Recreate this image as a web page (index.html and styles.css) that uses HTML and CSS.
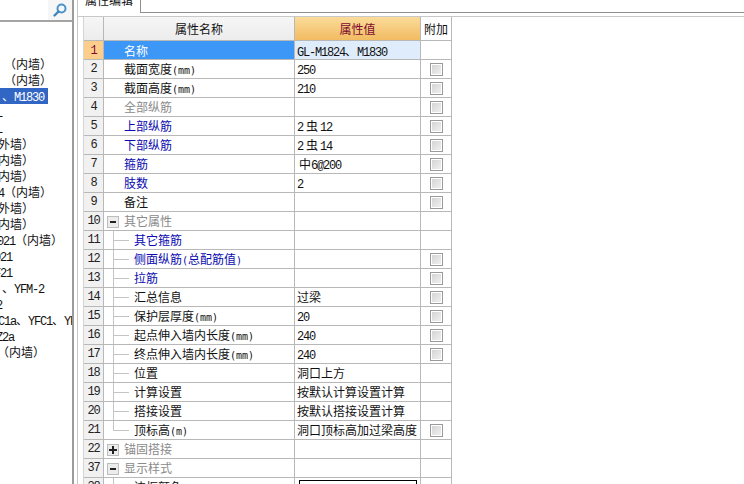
FILE: index.html
```html
<!DOCTYPE html>
<html lang="zh-CN">

<head>
    <meta charset="utf-8">
    <link rel="stylesheet" href="styles.css">
    <title>属性编辑</title>
</head>

<body>
    <div class="page">
        <aside class="side">
            <div class="search">
                <div class="search-btn">
                    <svg width="16" height="16" viewBox="0 0 16 16">
                        <circle cx="9.5" cy="6.5" r="4" fill="#f2f8fc" stroke="#4b93c9" stroke-width="2"/>
                        <path d="M6.5 9.5 L2.5 13.5" stroke="#3f86bd" stroke-width="2.4" stroke-linecap="round"/>
                    </svg>
                </div>
            </div>
            <div class="tree">
                <div class="node at4">（内墙）</div>
                <div class="node at4">（内墙）</div>
                <div class="node selected"><span class="at2">、<span class="lat">M1830</span></span></div>
                <div class="node atm10"><span class="lat">GL</span></div>
                <div class="node atm10"><span class="lat">GL</span></div>
                <div class="node atm2">外墙）</div>
                <div class="node atm2">内墙）</div>
                <div class="node atm2">内墙）</div>
                <div class="node atm2"><span class="lat">4</span>（内墙）</div>
                <div class="node atm2">外墙）</div>
                <div class="node atm2">内墙）</div>
                <div class="node atm3"><span class="lat">021</span>（内墙）</div>
                <div class="node atm6"><span class="lat">021</span></div>
                <div class="node atm6"><span class="lat">F21</span></div>
                <div class="node at2">、<span class="lat">YFM-2</span></div>
                <div class="node atm10"><span class="lat">M2</span></div>
                <div class="node atm2"><span class="lat">C1a</span>、<span class="lat">YFC1</span>、<span class="lat">YFC2</span></div>
                <div class="node atm4"><span class="lat">Z2a</span></div>
                <div class="node atm3">（内墙）</div>
            </div>
        </aside>

        <main class="editor">
            <div class="tabs">
                <div class="tab"><span class="tab-text">属性编辑</span></div>
            </div>
            <div class="grid-top">
                <table class="grid">
                    <colgroup>
                        <col class="c-num">
                        <col class="c-name">
                        <col class="c-val">
                        <col class="c-add">
                    </colgroup>
                    <thead>
                        <tr>
                            <th class="corner"></th>
                            <th class="h-name">属性名称</th>
                            <th class="h-val">属性值</th>
                            <th class="h-add">附加</th>
                        </tr>
                    </thead>
                    <tbody>
                        <tr class="current">
                            <td class="num">1</td>
                            <td class="name">名称</td>
                            <td class="val"><span class="lat">GL-M1824</span>、<span class="lat">M1830</span></td>
                            <td></td>
                        </tr>
                        <tr>
                            <td class="num">2</td>
                            <td class="name">截面宽度<span class="unit">(mm)</span></td>
                            <td class="val"><span class="lat">250</span></td>
                            <td class="add"><input type="checkbox"></td>
                        </tr>
                        <tr>
                            <td class="num">3</td>
                            <td class="name">截面高度<span class="unit">(mm)</span></td>
                            <td class="val"><span class="lat">210</span></td>
                            <td class="add"><input type="checkbox"></td>
                        </tr>
                        <tr>
                            <td class="num">4</td>
                            <td class="name muted">全部纵筋</td>
                            <td class="val"></td>
                            <td class="add"><input type="checkbox"></td>
                        </tr>
                        <tr>
                            <td class="num">5</td>
                            <td class="name link">上部纵筋</td>
                            <td class="val"><span class="lat">2</span><span class="rebar">虫</span><span class="lat">12</span></td>
                            <td class="add"><input type="checkbox"></td>
                        </tr>
                        <tr>
                            <td class="num">6</td>
                            <td class="name link">下部纵筋</td>
                            <td class="val"><span class="lat">2</span><span class="rebar">虫</span><span class="lat">14</span></td>
                            <td class="add"><input type="checkbox"></td>
                        </tr>
                        <tr>
                            <td class="num">7</td>
                            <td class="name link">箍筋</td>
                            <td class="val"><span class="dia">中</span><span class="lat">6@200</span></td>
                            <td class="add"><input type="checkbox"></td>
                        </tr>
                        <tr>
                            <td class="num">8</td>
                            <td class="name link">肢数</td>
                            <td class="val"><span class="lat">2</span></td>
                            <td class="add"><input type="checkbox"></td>
                        </tr>
                        <tr>
                            <td class="num">9</td>
                            <td class="name">备注</td>
                            <td class="val"></td>
                            <td class="add"><input type="checkbox"></td>
                        </tr>
                        <tr>
                            <td class="num">10</td>
                            <td class="group muted"><span class="toggle minus"></span>其它属性</td>
                            <td class="val"></td>
                            <td></td>
                        </tr>
                        <tr>
                            <td class="num">11</td>
                            <td class="child link">其它箍筋</td>
                            <td class="val"></td>
                            <td></td>
                        </tr>
                        <tr>
                            <td class="num">12</td>
                            <td class="child link">侧面纵筋<span class="unit">(</span>总配筋值<span class="unit">)</span></td>
                            <td class="val"></td>
                            <td class="add"><input type="checkbox"></td>
                        </tr>
                        <tr>
                            <td class="num">13</td>
                            <td class="child link">拉筋</td>
                            <td class="val"></td>
                            <td class="add"><input type="checkbox"></td>
                        </tr>
                        <tr>
                            <td class="num">14</td>
                            <td class="child">汇总信息</td>
                            <td class="val">过梁</td>
                            <td class="add"><input type="checkbox"></td>
                        </tr>
                        <tr>
                            <td class="num">15</td>
                            <td class="child">保护层厚度<span class="unit">(mm)</span></td>
                            <td class="val"><span class="lat">20</span></td>
                            <td class="add"><input type="checkbox"></td>
                        </tr>
                        <tr>
                            <td class="num">16</td>
                            <td class="child">起点伸入墙内长度<span class="unit">(mm)</span></td>
                            <td class="val"><span class="lat">240</span></td>
                            <td class="add"><input type="checkbox"></td>
                        </tr>
                        <tr>
                            <td class="num">17</td>
                            <td class="child">终点伸入墙内长度<span class="unit">(mm)</span></td>
                            <td class="val"><span class="lat">240</span></td>
                            <td class="add"><input type="checkbox"></td>
                        </tr>
                        <tr>
                            <td class="num">18</td>
                            <td class="child">位置</td>
                            <td class="val">洞口上方</td>
                            <td></td>
                        </tr>
                        <tr>
                            <td class="num">19</td>
                            <td class="child">计算设置</td>
                            <td class="val">按默认计算设置计算</td>
                            <td></td>
                        </tr>
                        <tr>
                            <td class="num">20</td>
                            <td class="child">搭接设置</td>
                            <td class="val">按默认搭接设置计算</td>
                            <td></td>
                        </tr>
                        <tr>
                            <td class="num">21</td>
                            <td class="child last">顶标高<span class="unit">(m)</span></td>
                            <td class="val">洞口顶标高加过梁高度</td>
                            <td class="add"><input type="checkbox"></td>
                        </tr>
                        <tr>
                            <td class="num">22</td>
                            <td class="group muted"><span class="toggle plus"></span>锚固搭接</td>
                            <td class="val"></td>
                            <td></td>
                        </tr>
                        <tr>
                            <td class="num">37</td>
                            <td class="group muted"><span class="toggle minus"></span>显示样式</td>
                            <td class="val"></td>
                            <td></td>
                        </tr>
                        <tr>
                            <td class="num">38</td>
                            <td class="child">边框颜色</td>
                            <td class="val"><div class="swatch"></div></td>
                            <td></td>
                        </tr>
                    </tbody>
                </table>
            </div>
        </main>
    </div>
</body>

</html>
```

FILE: styles.css
```css
*,
*:before,
*:after {
    box-sizing: border-box;
}

html,
body {
    margin: 0;
    height: 100%;
    overflow: hidden;
    background: #fff;
}

body {
    font-family: "Noto Sans CJK SC", "Liberation Mono", monospace;
    font-size: 12px;
    color: #111;
}

.page {
    display: flex;
    height: 484px;
    overflow: hidden;
}

/* latin text is narrower than the cjk cells, 6px a letter */
.lat {
    font-family: "Liberation Mono", monospace;
    font-size: 12px;
    line-height: 0;
    letter-spacing: -1.2px;
}

.unit {
    font-family: "DejaVu Sans Mono", monospace;
    font-size: 10px;
    line-height: 0;
}

.rebar {
    margin: 0 2px 0 3px;
    line-height: 0;
}

.dia {
    margin-left: 2px;
    line-height: 0;
}

/* left tree */
.side {
    flex: none;
    width: 74px;
    border-right: 2px solid #9c9c9c;
    overflow: hidden;
}

.search {
    display: flex;
    justify-content: flex-end;
    height: 22px;
    border-bottom: 2px solid #a4a4a4;
}

.search-btn {
    display: flex;
    align-items: center;
    justify-content: center;
    width: 24px;
    background: #f6f6f6;
}

.tree {
    padding-top: 34px;
    width: 72px;
    overflow: hidden;
}

.node {
    height: 16px;
    line-height: 16px;
    white-space: nowrap;
}

.node.selected {
    width: 48px;
    background: #3166c4;
    color: #fff;
}

.at4 { margin-left: 4px; }
.at2 { margin-left: 2px; }
.atm2 { margin-left: -2px; }
.atm3 { margin-left: -3px; }
.atm4 { margin-left: -4px; }
.atm6 { margin-left: -6px; }
.atm10 { margin-left: -10px; }

/* right side */
.editor {
    flex: 1;
    min-width: 0;
    margin-left: 3px;
    border-left: 1px solid #c8c8c8;
}

.tabs {
    height: 13px;
    margin-bottom: 3px;
    border-bottom: 1px solid #8f8f8f;
}

.tab {
    width: 63px;
    height: 13px;
    padding-left: 7px;
    overflow: hidden;
    background: #fff;
    border-right: 1px solid #8f8f8f;
}

.tab-text {
    display: block;
    margin-top: -9px;
    line-height: 18px;
    font-size: 12px;
}

.grid-top {
    padding-left: 5px;
    border-top: 1px solid #c8c8c8;
}

.grid {
    table-layout: fixed;
    width: 369px;
    border-collapse: separate;
    border-spacing: 0;
    border-left: 1px solid #d4d4d4;
}

.c-num { width: 20px; }
.c-name { width: 191px; }
.c-val { width: 126px; }
.c-add { width: 31px; }

.grid th,
.grid td {
    padding: 0;
    height: 19px;
    line-height: 18px;
    font-weight: normal;
    white-space: nowrap;
    overflow: hidden;
    border-right: 1px solid #b8b8b8;
    border-bottom: 1px solid #b8b8b8;
}

.grid th {
    height: 24px;
    line-height: 23px;
    font-size: 12px;
    text-align: center;
    background: linear-gradient(#f6f6f6, #ececec);
}

.grid th.h-val {
    color: #7d0a2e;
    background: linear-gradient(#fbdc9a, #f2bb62);
}

.grid th.h-add {
    background: #fff;
}

.grid td.num {
    text-align: center;
    font-family: "Liberation Mono", monospace;
    font-size: 12px;
    letter-spacing: -1.2px;
    color: #222;
    background: #f1f1f1;
}

.grid td.name {
    padding-left: 20px;
}

.grid td.group {
    padding-left: 3px;
}

.grid td.child {
    padding-left: 30px;
    background:
        linear-gradient(#c4c4c4, #c4c4c4) 9px 0 / 1px 100% no-repeat,
        linear-gradient(#c4c4c4, #c4c4c4) 9px 9px / 16px 1px no-repeat;
}

.grid td.child.last {
    background:
        linear-gradient(#c4c4c4, #c4c4c4) 9px 0 / 1px 10px no-repeat,
        linear-gradient(#c4c4c4, #c4c4c4) 9px 9px / 16px 1px no-repeat;
}

.grid td.val {
    padding-left: 2px;
}

.grid td.add {
    text-align: center;
}

.grid .current td {
    padding-top: 2px;
    line-height: 16px;
}

.grid .current td.num {
    color: #7d0a2e;
    background: #fdcd8b;
}

.grid .current td.name {
    background: #3c97f6;
    color: #fff;
}

.grid .current td.val {
    background: #deecfb;
}

.muted {
    color: #8a8a8a;
}

.link {
    color: #0a0ab0;
}

.toggle {
    display: inline-block;
    width: 12px;
    height: 12px;
    margin-right: 5px;
    vertical-align: -2px;
    border: 1px solid #bdbdbd;
    background-color: #ececec;
}

.toggle.minus {
    background-image: linear-gradient(#222, #222);
    background-size: 6px 2px;
    background-position: center;
    background-repeat: no-repeat;
}

.toggle.plus {
    background-image: linear-gradient(#222, #222), linear-gradient(#222, #222);
    background-size: 8px 2px, 2px 8px;
    background-position: center;
    background-repeat: no-repeat;
}

.add input {
    appearance: none;
    display: block;
    width: 13px;
    height: 13px;
    margin: 1px auto 0;
    border: 1px solid #9a9a9a;
    background: linear-gradient(135deg, #d2d2d2, #f2f2f2);
    box-shadow: inset 0 0 0 1px #fff;
}

.swatch {
    height: 16px;
    margin: 1px 3px 0 2px;
    border: 1px solid #000;
    background: #fff;
}
```
